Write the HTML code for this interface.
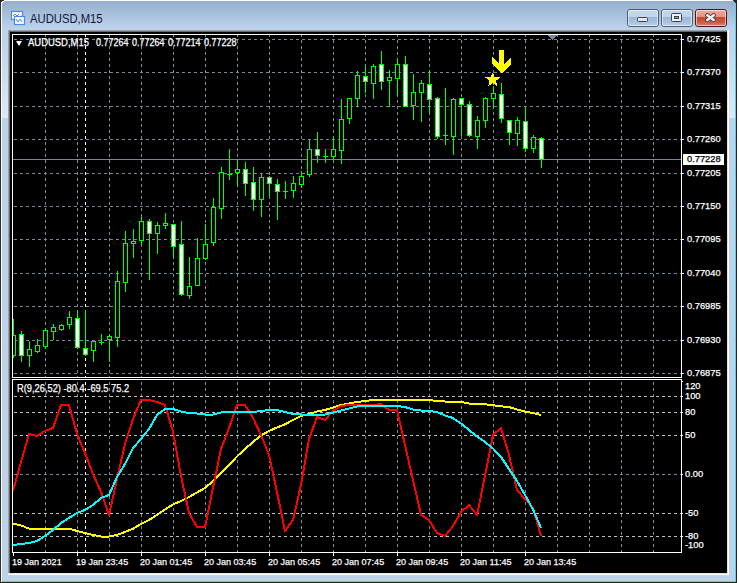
<!DOCTYPE html>
<html><head><meta charset="utf-8"><style>
html,body{margin:0;padding:0;}
body{width:739px;height:583px;overflow:hidden;position:relative;background:#fff;font-family:"Liberation Sans",sans-serif;}
.pl,.il,.tl,.hdr,.hnum,.ind,.plbox{-webkit-text-stroke:0.25px currentColor;}
.win{position:absolute;left:0;top:0;width:737px;height:583px;}
.abs{position:absolute;}
.pl{position:absolute;left:687px;font-size:9.6px;line-height:12px;color:#fff;transform:scaleX(0.97);transform-origin:0 0;white-space:nowrap;}
.il{position:absolute;left:685px;font-size:9.6px;line-height:12px;color:#fff;transform:scaleX(0.97);transform-origin:0 0;white-space:nowrap;}
.tl{position:absolute;top:556px;font-size:9.6px;line-height:12px;color:#fff;transform:scaleX(0.94);transform-origin:0 0;white-space:nowrap;}
.hdr{position:absolute;left:28px;top:37px;font-size:10px;line-height:12px;color:#fff;transform:scaleX(0.945);transform-origin:0 0;white-space:pre;}
.hnum{position:absolute;top:37px;font-size:10px;line-height:12px;color:#fff;transform:scaleX(0.9);transform-origin:0 0;white-space:pre;}
.ind{position:absolute;left:17px;top:383px;font-size:10px;line-height:12px;color:#fff;transform:scaleX(0.93);transform-origin:0 0;white-space:pre;}
.title{position:absolute;left:30px;top:11px;font-size:12.5px;line-height:16px;color:#14143a;transform:scaleX(0.9);transform-origin:0 0;white-space:nowrap;}
.btn{position:absolute;top:9px;width:30px;height:16px;border:1px solid #4f5d72;border-radius:3px;background:linear-gradient(#c3d6eb 0px,#c0d3ea 7px,#9cb6d3 7px,#a9c2de 12px,#b9d0ea 16px);}
.cls{border-color:#4e1422;background:linear-gradient(#eba99b 0px,#e29584 7px,#c3462d 7px,#cc5a40 12px,#dc8068 16px);}
.bin{position:absolute;left:0;top:0;right:0;bottom:0;border:1px solid rgba(255,255,255,0.55);border-radius:2px;}
.gmin{position:absolute;left:9px;top:7px;width:9px;height:3px;background:#e6e6e6;border:1px solid #3a4250;border-radius:1.5px;}
.gmax{position:absolute;left:9px;top:3px;width:9px;height:7px;background:#f0f0f0;border:1px solid #3a4250;border-radius:1.5px;}
.gmax div{position:absolute;left:2px;top:2px;width:3px;height:1px;background:#7ea4cc;border:1px solid #3a4250;}
.plbox{position:absolute;left:687px;top:153px;font-size:9.6px;line-height:12px;color:#000;transform:scaleX(0.97);transform-origin:0 0;white-space:nowrap;}
.tri{position:absolute;left:16px;top:41px;width:0;height:0;border-left:3.5px solid transparent;border-right:3.5px solid transparent;border-top:5px solid #fff;}
</style></head><body>
<div class="abs" style="left:0;top:0;width:737px;height:583px;background:#bcd3ea;"></div>
<div class="abs" style="left:0;top:0;width:737px;height:30px;background:linear-gradient(#93adcb,#bdd4ec);"></div>
<div class="abs" style="left:0;top:0;width:737px;height:1px;background:#fff;"></div>
<div class="abs" style="left:0;top:0;width:1px;height:583px;background:#333;"></div>
<div class="abs" style="left:1px;top:1px;width:1px;height:582px;background:#fff;"></div>
<div class="abs" style="left:735px;top:3px;width:1px;height:579px;background:#4fd0f5;"></div>
<div class="abs" style="left:736px;top:2px;width:1px;height:581px;background:#222;"></div>
<div class="abs" style="left:737px;top:0;width:2px;height:583px;background:#fff;"></div>
<div class="abs" style="left:2px;top:581px;width:734px;height:1px;background:#4fd0f5;"></div>
<div class="abs" style="left:0;top:582px;width:737px;height:1px;background:#222;"></div>
<div class="abs" style="left:2px;top:36px;width:6px;height:82px;background:linear-gradient(rgba(255,255,255,0),rgba(255,255,255,0.5));"></div>
<div class="abs" style="left:729px;top:36px;width:6px;height:82px;background:linear-gradient(rgba(255,255,255,0),rgba(255,255,255,0.5));"></div>
<div class="abs" style="left:8px;top:30px;width:721px;height:545px;background:#fff;"></div>
<div class="abs" style="left:8px;top:30px;width:720px;height:544px;background:#e3e3e3;"></div>
<div class="abs" style="left:8px;top:30px;width:719px;height:543px;background:#a0a0a0;"></div>
<div class="abs" style="left:9px;top:31px;width:718px;height:542px;background:#696969;"></div>
<svg class="abs" style="left:0;top:0" width="739" height="583" shape-rendering="crispEdges">
<defs><clipPath id="indclip"><rect x="13" y="380" width="668" height="172"/></clipPath></defs>
<rect x="10" y="32" width="717" height="541" fill="#000"/>
<rect x="12.5" y="34.5" width="669" height="343" fill="none" stroke="#fff" stroke-width="1"/>
<rect x="12.5" y="379.5" width="669" height="173" fill="none" stroke="#fff" stroke-width="1"/>
<line x1="14" y1="39.5" x2="681" y2="39.5" stroke="#778899" stroke-dasharray="3 3"/>
<line x1="14" y1="72.5" x2="681" y2="72.5" stroke="#778899" stroke-dasharray="3 3"/>
<line x1="14" y1="106.5" x2="681" y2="106.5" stroke="#778899" stroke-dasharray="3 3"/>
<line x1="14" y1="139.5" x2="681" y2="139.5" stroke="#778899" stroke-dasharray="3 3"/>
<line x1="14" y1="173.5" x2="681" y2="173.5" stroke="#778899" stroke-dasharray="3 3"/>
<line x1="14" y1="206.5" x2="681" y2="206.5" stroke="#778899" stroke-dasharray="3 3"/>
<line x1="14" y1="239.5" x2="681" y2="239.5" stroke="#778899" stroke-dasharray="3 3"/>
<line x1="14" y1="273.5" x2="681" y2="273.5" stroke="#778899" stroke-dasharray="3 3"/>
<line x1="14" y1="306.5" x2="681" y2="306.5" stroke="#778899" stroke-dasharray="3 3"/>
<line x1="14" y1="340.5" x2="681" y2="340.5" stroke="#778899" stroke-dasharray="3 3"/>
<line x1="14" y1="373.5" x2="681" y2="373.5" stroke="#778899" stroke-dasharray="3 3"/>
<line x1="45.5" y1="35" x2="45.5" y2="377" stroke="#778899" stroke-dasharray="3 3" stroke-dashoffset="1"/>
<line x1="45.5" y1="382" x2="45.5" y2="552" stroke="#778899" stroke-dasharray="3 3"/>
<line x1="77.5" y1="35" x2="77.5" y2="377" stroke="#778899" stroke-dasharray="3 3" stroke-dashoffset="1"/>
<line x1="77.5" y1="382" x2="77.5" y2="552" stroke="#778899" stroke-dasharray="3 3"/>
<line x1="109.5" y1="35" x2="109.5" y2="377" stroke="#778899" stroke-dasharray="3 3" stroke-dashoffset="1"/>
<line x1="109.5" y1="382" x2="109.5" y2="552" stroke="#778899" stroke-dasharray="3 3"/>
<line x1="141.5" y1="35" x2="141.5" y2="377" stroke="#778899" stroke-dasharray="3 3" stroke-dashoffset="1"/>
<line x1="141.5" y1="382" x2="141.5" y2="552" stroke="#778899" stroke-dasharray="3 3"/>
<line x1="173.5" y1="35" x2="173.5" y2="377" stroke="#778899" stroke-dasharray="3 3" stroke-dashoffset="1"/>
<line x1="173.5" y1="382" x2="173.5" y2="552" stroke="#778899" stroke-dasharray="3 3"/>
<line x1="205.5" y1="35" x2="205.5" y2="377" stroke="#778899" stroke-dasharray="3 3" stroke-dashoffset="1"/>
<line x1="205.5" y1="382" x2="205.5" y2="552" stroke="#778899" stroke-dasharray="3 3"/>
<line x1="237.5" y1="35" x2="237.5" y2="377" stroke="#778899" stroke-dasharray="3 3" stroke-dashoffset="1"/>
<line x1="237.5" y1="382" x2="237.5" y2="552" stroke="#778899" stroke-dasharray="3 3"/>
<line x1="269.5" y1="35" x2="269.5" y2="377" stroke="#778899" stroke-dasharray="3 3" stroke-dashoffset="1"/>
<line x1="269.5" y1="382" x2="269.5" y2="552" stroke="#778899" stroke-dasharray="3 3"/>
<line x1="301.5" y1="35" x2="301.5" y2="377" stroke="#778899" stroke-dasharray="3 3" stroke-dashoffset="1"/>
<line x1="301.5" y1="382" x2="301.5" y2="552" stroke="#778899" stroke-dasharray="3 3"/>
<line x1="333.5" y1="35" x2="333.5" y2="377" stroke="#778899" stroke-dasharray="3 3" stroke-dashoffset="1"/>
<line x1="333.5" y1="382" x2="333.5" y2="552" stroke="#778899" stroke-dasharray="3 3"/>
<line x1="365.5" y1="35" x2="365.5" y2="377" stroke="#778899" stroke-dasharray="3 3" stroke-dashoffset="1"/>
<line x1="365.5" y1="382" x2="365.5" y2="552" stroke="#778899" stroke-dasharray="3 3"/>
<line x1="397.5" y1="35" x2="397.5" y2="377" stroke="#778899" stroke-dasharray="3 3" stroke-dashoffset="1"/>
<line x1="397.5" y1="382" x2="397.5" y2="552" stroke="#778899" stroke-dasharray="3 3"/>
<line x1="429.5" y1="35" x2="429.5" y2="377" stroke="#778899" stroke-dasharray="3 3" stroke-dashoffset="1"/>
<line x1="429.5" y1="382" x2="429.5" y2="552" stroke="#778899" stroke-dasharray="3 3"/>
<line x1="461.5" y1="35" x2="461.5" y2="377" stroke="#778899" stroke-dasharray="3 3" stroke-dashoffset="1"/>
<line x1="461.5" y1="382" x2="461.5" y2="552" stroke="#778899" stroke-dasharray="3 3"/>
<line x1="493.5" y1="35" x2="493.5" y2="377" stroke="#778899" stroke-dasharray="3 3" stroke-dashoffset="1"/>
<line x1="493.5" y1="382" x2="493.5" y2="552" stroke="#778899" stroke-dasharray="3 3"/>
<line x1="525.5" y1="35" x2="525.5" y2="377" stroke="#778899" stroke-dasharray="3 3" stroke-dashoffset="1"/>
<line x1="525.5" y1="382" x2="525.5" y2="552" stroke="#778899" stroke-dasharray="3 3"/>
<line x1="557.5" y1="35" x2="557.5" y2="377" stroke="#778899" stroke-dasharray="3 3" stroke-dashoffset="1"/>
<line x1="557.5" y1="382" x2="557.5" y2="552" stroke="#778899" stroke-dasharray="3 3"/>
<line x1="589.5" y1="35" x2="589.5" y2="377" stroke="#778899" stroke-dasharray="3 3" stroke-dashoffset="1"/>
<line x1="589.5" y1="382" x2="589.5" y2="552" stroke="#778899" stroke-dasharray="3 3"/>
<line x1="621.5" y1="35" x2="621.5" y2="377" stroke="#778899" stroke-dasharray="3 3" stroke-dashoffset="1"/>
<line x1="621.5" y1="382" x2="621.5" y2="552" stroke="#778899" stroke-dasharray="3 3"/>
<line x1="653.5" y1="35" x2="653.5" y2="377" stroke="#778899" stroke-dasharray="3 3" stroke-dashoffset="1"/>
<line x1="653.5" y1="382" x2="653.5" y2="552" stroke="#778899" stroke-dasharray="3 3"/>
<line x1="85.5" y1="35" x2="85.5" y2="377" stroke="#fff" stroke-dasharray="3 3" stroke-dashoffset="1"/>
<line x1="85.5" y1="382" x2="85.5" y2="552" stroke="#fff" stroke-dasharray="3 3"/>
<line x1="14" y1="396.5" x2="681" y2="396.5" stroke="#c0c0c0" stroke-dasharray="3 3"/>
<line x1="14" y1="412.5" x2="681" y2="412.5" stroke="#c0c0c0" stroke-dasharray="3 3"/>
<line x1="14" y1="435.5" x2="681" y2="435.5" stroke="#c0c0c0" stroke-dasharray="3 3"/>
<line x1="14" y1="474.5" x2="681" y2="474.5" stroke="#778899" stroke-dasharray="3 3"/>
<line x1="14" y1="513.5" x2="681" y2="513.5" stroke="#c0c0c0" stroke-dasharray="3 3"/>
<line x1="14" y1="536.5" x2="681" y2="536.5" stroke="#c0c0c0" stroke-dasharray="3 3"/>
<rect x="13" y="159" width="668" height="1" fill="#778899"/>
<polygon points="547.6,35 557.9,35 552.7,40.3" fill="#778899"/>
<rect x="13" y="319" width="1" height="39" fill="#00ff00"/>
<rect x="11" y="335" width="5" height="21" fill="#00ff00"/>
<rect x="12" y="336" width="3" height="19" fill="#000"/>
<rect x="21" y="331" width="1" height="31" fill="#00ff00"/>
<rect x="19" y="334" width="5" height="22" fill="#00ff00"/>
<rect x="20" y="335" width="3" height="20" fill="#fff"/>
<rect x="29" y="341" width="1" height="26" fill="#00ff00"/>
<rect x="27" y="349" width="5" height="7" fill="#00ff00"/>
<rect x="28" y="350" width="3" height="5" fill="#000"/>
<rect x="37" y="339" width="1" height="14" fill="#00ff00"/>
<rect x="35" y="345" width="5" height="7" fill="#00ff00"/>
<rect x="36" y="346" width="3" height="5" fill="#000"/>
<rect x="45" y="328" width="1" height="21" fill="#00ff00"/>
<rect x="43" y="330" width="5" height="17" fill="#00ff00"/>
<rect x="44" y="331" width="3" height="15" fill="#000"/>
<rect x="53" y="324" width="1" height="16" fill="#00ff00"/>
<rect x="51" y="327" width="5" height="5" fill="#00ff00"/>
<rect x="52" y="328" width="3" height="3" fill="#000"/>
<rect x="61" y="324" width="1" height="7" fill="#00ff00"/>
<rect x="59" y="325" width="5" height="5" fill="#00ff00"/>
<rect x="60" y="326" width="3" height="3" fill="#000"/>
<rect x="69" y="311" width="1" height="18" fill="#00ff00"/>
<rect x="67" y="317" width="5" height="8" fill="#00ff00"/>
<rect x="68" y="318" width="3" height="6" fill="#000"/>
<rect x="77" y="310" width="1" height="39" fill="#00ff00"/>
<rect x="75" y="318" width="5" height="30" fill="#00ff00"/>
<rect x="76" y="319" width="3" height="28" fill="#fff"/>
<rect x="85" y="310" width="1" height="46" fill="#00ff00"/>
<rect x="83" y="348" width="5" height="7" fill="#00ff00"/>
<rect x="84" y="349" width="3" height="5" fill="#fff"/>
<rect x="93" y="341" width="1" height="21" fill="#00ff00"/>
<rect x="91" y="341" width="5" height="10" fill="#00ff00"/>
<rect x="92" y="342" width="3" height="8" fill="#000"/>
<rect x="101" y="334" width="1" height="11" fill="#00ff00"/>
<rect x="99" y="342" width="5" height="1" fill="#00ff00"/>
<rect x="109" y="334" width="1" height="28" fill="#00ff00"/>
<rect x="107" y="336" width="5" height="4" fill="#00ff00"/>
<rect x="108" y="337" width="3" height="2" fill="#000"/>
<rect x="117" y="271" width="1" height="76" fill="#00ff00"/>
<rect x="115" y="281" width="5" height="57" fill="#00ff00"/>
<rect x="116" y="282" width="3" height="55" fill="#000"/>
<rect x="125" y="231" width="1" height="61" fill="#00ff00"/>
<rect x="123" y="243" width="5" height="40" fill="#00ff00"/>
<rect x="124" y="244" width="3" height="38" fill="#000"/>
<rect x="133" y="229" width="1" height="29" fill="#00ff00"/>
<rect x="131" y="241" width="5" height="3" fill="#00ff00"/>
<rect x="132" y="242" width="3" height="1" fill="#000"/>
<rect x="141" y="217" width="1" height="28" fill="#00ff00"/>
<rect x="139" y="221" width="5" height="20" fill="#00ff00"/>
<rect x="140" y="222" width="3" height="18" fill="#000"/>
<rect x="149" y="219" width="1" height="61" fill="#00ff00"/>
<rect x="147" y="221" width="5" height="13" fill="#00ff00"/>
<rect x="148" y="222" width="3" height="11" fill="#fff"/>
<rect x="157" y="222" width="1" height="32" fill="#00ff00"/>
<rect x="155" y="225" width="5" height="9" fill="#00ff00"/>
<rect x="156" y="226" width="3" height="7" fill="#000"/>
<rect x="165" y="213" width="1" height="16" fill="#00ff00"/>
<rect x="163" y="223" width="5" height="3" fill="#00ff00"/>
<rect x="164" y="224" width="3" height="1" fill="#000"/>
<rect x="173" y="224" width="1" height="34" fill="#00ff00"/>
<rect x="171" y="224" width="5" height="23" fill="#00ff00"/>
<rect x="172" y="225" width="3" height="21" fill="#fff"/>
<rect x="181" y="221" width="1" height="75" fill="#00ff00"/>
<rect x="179" y="244" width="5" height="51" fill="#00ff00"/>
<rect x="180" y="245" width="3" height="49" fill="#fff"/>
<rect x="189" y="257" width="1" height="42" fill="#00ff00"/>
<rect x="187" y="286" width="5" height="10" fill="#00ff00"/>
<rect x="188" y="287" width="3" height="8" fill="#000"/>
<rect x="197" y="238" width="1" height="48" fill="#00ff00"/>
<rect x="195" y="258" width="5" height="28" fill="#00ff00"/>
<rect x="196" y="259" width="3" height="26" fill="#000"/>
<rect x="205" y="224" width="1" height="36" fill="#00ff00"/>
<rect x="203" y="244" width="5" height="15" fill="#00ff00"/>
<rect x="204" y="245" width="3" height="13" fill="#000"/>
<rect x="213" y="198" width="1" height="48" fill="#00ff00"/>
<rect x="211" y="207" width="5" height="36" fill="#00ff00"/>
<rect x="212" y="208" width="3" height="34" fill="#000"/>
<rect x="221" y="167" width="1" height="52" fill="#00ff00"/>
<rect x="219" y="172" width="5" height="37" fill="#00ff00"/>
<rect x="220" y="173" width="3" height="35" fill="#000"/>
<rect x="229" y="149" width="1" height="31" fill="#00ff00"/>
<rect x="227" y="174" width="5" height="1" fill="#00ff00"/>
<rect x="237" y="159" width="1" height="28" fill="#00ff00"/>
<rect x="235" y="169" width="5" height="4" fill="#00ff00"/>
<rect x="236" y="170" width="3" height="2" fill="#000"/>
<rect x="245" y="162" width="1" height="34" fill="#00ff00"/>
<rect x="243" y="169" width="5" height="15" fill="#00ff00"/>
<rect x="244" y="170" width="3" height="13" fill="#fff"/>
<rect x="253" y="167" width="1" height="44" fill="#00ff00"/>
<rect x="251" y="182" width="5" height="18" fill="#00ff00"/>
<rect x="252" y="183" width="3" height="16" fill="#fff"/>
<rect x="261" y="174" width="1" height="43" fill="#00ff00"/>
<rect x="259" y="177" width="5" height="23" fill="#00ff00"/>
<rect x="260" y="178" width="3" height="21" fill="#000"/>
<rect x="269" y="176" width="1" height="20" fill="#00ff00"/>
<rect x="267" y="177" width="5" height="7" fill="#00ff00"/>
<rect x="268" y="178" width="3" height="5" fill="#fff"/>
<rect x="277" y="179" width="1" height="41" fill="#00ff00"/>
<rect x="275" y="184" width="5" height="8" fill="#00ff00"/>
<rect x="276" y="185" width="3" height="6" fill="#fff"/>
<rect x="285" y="181" width="1" height="18" fill="#00ff00"/>
<rect x="283" y="191" width="5" height="1" fill="#00ff00"/>
<rect x="293" y="176" width="1" height="22" fill="#00ff00"/>
<rect x="291" y="183" width="5" height="8" fill="#00ff00"/>
<rect x="292" y="184" width="3" height="6" fill="#000"/>
<rect x="301" y="171" width="1" height="17" fill="#00ff00"/>
<rect x="299" y="176" width="5" height="9" fill="#00ff00"/>
<rect x="300" y="177" width="3" height="7" fill="#000"/>
<rect x="309" y="140" width="1" height="37" fill="#00ff00"/>
<rect x="307" y="149" width="5" height="26" fill="#00ff00"/>
<rect x="308" y="150" width="3" height="24" fill="#000"/>
<rect x="317" y="132" width="1" height="31" fill="#00ff00"/>
<rect x="315" y="149" width="5" height="7" fill="#00ff00"/>
<rect x="316" y="150" width="3" height="5" fill="#fff"/>
<rect x="325" y="149" width="1" height="14" fill="#00ff00"/>
<rect x="323" y="156" width="5" height="1" fill="#00ff00"/>
<rect x="333" y="137" width="1" height="22" fill="#00ff00"/>
<rect x="331" y="149" width="5" height="8" fill="#00ff00"/>
<rect x="332" y="150" width="3" height="6" fill="#000"/>
<rect x="341" y="99" width="1" height="65" fill="#00ff00"/>
<rect x="339" y="119" width="5" height="32" fill="#00ff00"/>
<rect x="340" y="120" width="3" height="30" fill="#000"/>
<rect x="349" y="98" width="1" height="26" fill="#00ff00"/>
<rect x="347" y="98" width="5" height="21" fill="#00ff00"/>
<rect x="348" y="99" width="3" height="19" fill="#000"/>
<rect x="357" y="71" width="1" height="36" fill="#00ff00"/>
<rect x="355" y="75" width="5" height="24" fill="#00ff00"/>
<rect x="356" y="76" width="3" height="22" fill="#000"/>
<rect x="365" y="66" width="1" height="27" fill="#00ff00"/>
<rect x="363" y="76" width="5" height="6" fill="#00ff00"/>
<rect x="364" y="77" width="3" height="4" fill="#fff"/>
<rect x="373" y="64" width="1" height="35" fill="#00ff00"/>
<rect x="371" y="66" width="5" height="18" fill="#00ff00"/>
<rect x="372" y="67" width="3" height="16" fill="#000"/>
<rect x="381" y="51" width="1" height="39" fill="#00ff00"/>
<rect x="379" y="64" width="5" height="18" fill="#00ff00"/>
<rect x="380" y="65" width="3" height="16" fill="#fff"/>
<rect x="389" y="70" width="1" height="37" fill="#00ff00"/>
<rect x="387" y="77" width="5" height="4" fill="#00ff00"/>
<rect x="388" y="78" width="3" height="2" fill="#000"/>
<rect x="397" y="58" width="1" height="38" fill="#00ff00"/>
<rect x="395" y="64" width="5" height="15" fill="#00ff00"/>
<rect x="396" y="65" width="3" height="13" fill="#000"/>
<rect x="405" y="56" width="1" height="51" fill="#00ff00"/>
<rect x="403" y="64" width="5" height="43" fill="#00ff00"/>
<rect x="404" y="65" width="3" height="41" fill="#fff"/>
<rect x="413" y="74" width="1" height="46" fill="#00ff00"/>
<rect x="411" y="92" width="5" height="14" fill="#00ff00"/>
<rect x="412" y="93" width="3" height="12" fill="#000"/>
<rect x="421" y="80" width="1" height="42" fill="#00ff00"/>
<rect x="419" y="83" width="5" height="10" fill="#00ff00"/>
<rect x="420" y="84" width="3" height="8" fill="#000"/>
<rect x="429" y="70" width="1" height="43" fill="#00ff00"/>
<rect x="427" y="84" width="5" height="16" fill="#00ff00"/>
<rect x="428" y="85" width="3" height="14" fill="#fff"/>
<rect x="437" y="97" width="1" height="42" fill="#00ff00"/>
<rect x="435" y="98" width="5" height="39" fill="#00ff00"/>
<rect x="436" y="99" width="3" height="37" fill="#fff"/>
<rect x="445" y="88" width="1" height="57" fill="#00ff00"/>
<rect x="443" y="135" width="5" height="1" fill="#00ff00"/>
<rect x="453" y="98" width="1" height="57" fill="#00ff00"/>
<rect x="451" y="99" width="5" height="38" fill="#00ff00"/>
<rect x="452" y="100" width="3" height="36" fill="#000"/>
<rect x="461" y="98" width="1" height="38" fill="#00ff00"/>
<rect x="459" y="98" width="5" height="7" fill="#00ff00"/>
<rect x="460" y="99" width="3" height="5" fill="#fff"/>
<rect x="469" y="101" width="1" height="36" fill="#00ff00"/>
<rect x="467" y="104" width="5" height="32" fill="#00ff00"/>
<rect x="468" y="105" width="3" height="30" fill="#fff"/>
<rect x="477" y="116" width="1" height="33" fill="#00ff00"/>
<rect x="475" y="120" width="5" height="17" fill="#00ff00"/>
<rect x="476" y="121" width="3" height="15" fill="#000"/>
<rect x="485" y="97" width="1" height="31" fill="#00ff00"/>
<rect x="483" y="98" width="5" height="23" fill="#00ff00"/>
<rect x="484" y="99" width="3" height="21" fill="#000"/>
<rect x="493" y="86" width="1" height="23" fill="#00ff00"/>
<rect x="491" y="93" width="5" height="6" fill="#00ff00"/>
<rect x="492" y="94" width="3" height="4" fill="#000"/>
<rect x="501" y="83" width="1" height="40" fill="#00ff00"/>
<rect x="499" y="94" width="5" height="25" fill="#00ff00"/>
<rect x="500" y="95" width="3" height="23" fill="#fff"/>
<rect x="509" y="120" width="1" height="25" fill="#00ff00"/>
<rect x="507" y="120" width="5" height="13" fill="#00ff00"/>
<rect x="508" y="121" width="3" height="11" fill="#fff"/>
<rect x="517" y="117" width="1" height="29" fill="#00ff00"/>
<rect x="515" y="120" width="5" height="14" fill="#00ff00"/>
<rect x="516" y="121" width="3" height="12" fill="#000"/>
<rect x="525" y="107" width="1" height="45" fill="#00ff00"/>
<rect x="523" y="121" width="5" height="28" fill="#00ff00"/>
<rect x="524" y="122" width="3" height="26" fill="#fff"/>
<rect x="533" y="135" width="1" height="18" fill="#00ff00"/>
<rect x="531" y="137" width="5" height="12" fill="#00ff00"/>
<rect x="532" y="138" width="3" height="10" fill="#000"/>
<rect x="541" y="137" width="1" height="31" fill="#00ff00"/>
<rect x="539" y="138" width="5" height="22" fill="#00ff00"/>
<rect x="540" y="139" width="3" height="20" fill="#fff"/>
<rect x="10" y="35" width="2" height="342" fill="#000"/>
<rect x="12" y="34" width="1" height="344" fill="#fff"/>
<polygon points="499,50 504,50 504,64 511,57 511,64 501.5,73.5 492,64 492,57 499,64" fill="#ffff00"/>
<polygon points="492.70,72.00 494.61,77.27 500.21,77.46 495.79,80.90 497.34,86.29 492.70,83.15 488.06,86.29 489.61,80.90 485.19,77.46 490.79,77.27" fill="#ffff00"/>
<g clip-path="url(#indclip)">
<polyline points="13,523.5 21,525.5 29,528.5 37,528.5 45,528.5 53,528.5 61,528.5 69,528.5 77,531 85,533 93,535 101,536.5 109,536.5 117,535 125,532 133,528.7 141,524 149,520 157,515 165,509.5 173,504.5 181,501 189,497 197,492.5 205,488 213,481 221,473 229,465 237,456.5 245,449 253,442 261,435.5 269,431 277,427.5 285,424.3 293,420 301,416 309,414 317,411.5 325,410 333,407.5 341,405 349,403.5 357,402 365,401 373,400 381,400 389,400 397,400 405,400 413,400 421,400 429,400 437,401 445,401.5 453,402 461,402 469,403.5 477,404 485,404.2 493,405.3 501,406.3 509,407 517,409.5 525,411.5 533,413 541,415" fill="none" stroke="#ffff00" stroke-width="2" stroke-linejoin="round"/>
<polyline points="13,491 21,462 29,434 37,436 45,431 53,428 61,405 69,405 77,434 85,453 93,474 101,492 109,515 117,479 125,444 133,419 141,400 149,400 157,402 165,405 173,432 181,476 189,513 197,527 205,527 213,488 221,449 229,428 237,405 245,405 253,418 261,435 269,455 277,492 285,531 293,520 301,485 309,439 317,417 325,420 333,411 341,406 349,405 357,405 365,405 373,405 381,404 389,410 397,410 405,445 413,480 421,515 429,520 437,533 445,536 453,526 461,512 469,505 477,515 485,476 493,435 501,428 509,455 517,490 525,499 533,508 541,536" fill="none" stroke="#ff0000" stroke-width="2" stroke-linejoin="round"/>
<polyline points="13,545 21,544 29,543 37,541 45,536 53,530 61,523 69,518 77,513 85,510 93,505 101,498 109,495 117,477 125,464 133,448 141,439 149,429 157,415 165,409 173,409 181,411.5 189,413 197,413.5 205,414.5 213,414.5 221,412.5 229,411.5 237,412 245,412 253,412 261,411 269,410 277,410 285,412 293,414 301,414.5 309,414.5 317,414.5 325,414.5 333,412.5 341,410.5 349,408.5 357,406.5 365,405.8 373,405.8 381,405.8 389,405.8 397,406 405,407 413,409.5 421,410.5 429,411 437,412 445,415.5 453,418 461,423.5 469,430 477,436.5 485,442 493,448.5 501,457 509,469 517,481 525,495 533,509.5 541,528" fill="none" stroke="#00ffff" stroke-width="2" stroke-linejoin="round"/>
</g>
<rect x="682" y="39" width="2" height="1" fill="#fff"/>
<rect x="682" y="72" width="2" height="1" fill="#fff"/>
<rect x="682" y="106" width="2" height="1" fill="#fff"/>
<rect x="682" y="139" width="2" height="1" fill="#fff"/>
<rect x="682" y="173" width="2" height="1" fill="#fff"/>
<rect x="682" y="206" width="2" height="1" fill="#fff"/>
<rect x="682" y="239" width="2" height="1" fill="#fff"/>
<rect x="682" y="273" width="2" height="1" fill="#fff"/>
<rect x="682" y="306" width="2" height="1" fill="#fff"/>
<rect x="682" y="340" width="2" height="1" fill="#fff"/>
<rect x="682" y="373" width="2" height="1" fill="#fff"/>
<rect x="13" y="553" width="1" height="3" fill="#fff"/>
<rect x="77" y="553" width="1" height="3" fill="#fff"/>
<rect x="141" y="553" width="1" height="3" fill="#fff"/>
<rect x="205" y="553" width="1" height="3" fill="#fff"/>
<rect x="269" y="553" width="1" height="3" fill="#fff"/>
<rect x="333" y="553" width="1" height="3" fill="#fff"/>
<rect x="397" y="553" width="1" height="3" fill="#fff"/>
<rect x="461" y="553" width="1" height="3" fill="#fff"/>
<rect x="525" y="553" width="1" height="3" fill="#fff"/>
<rect x="682" y="381" width="1" height="1" fill="#fff"/>
<rect x="682" y="396" width="1" height="1" fill="#fff"/>
<rect x="682" y="412" width="1" height="1" fill="#fff"/>
<rect x="682" y="435" width="1" height="1" fill="#fff"/>
<rect x="682" y="474" width="1" height="1" fill="#fff"/>
<rect x="682" y="513" width="1" height="1" fill="#fff"/>
<rect x="682" y="536" width="1" height="1" fill="#fff"/>
<rect x="683" y="154" width="41" height="11" fill="#fff"/>
</svg>
<div class="pl" style="top:33px">0.77425</div>
<div class="pl" style="top:66px">0.77370</div>
<div class="pl" style="top:100px">0.77315</div>
<div class="pl" style="top:133px">0.77260</div>
<div class="pl" style="top:167px">0.77205</div>
<div class="pl" style="top:200px">0.77150</div>
<div class="pl" style="top:233px">0.77095</div>
<div class="pl" style="top:267px">0.77040</div>
<div class="pl" style="top:300px">0.76985</div>
<div class="pl" style="top:334px">0.76930</div>
<div class="pl" style="top:367px">0.76875</div>
<div class="il" style="top:380px">120</div>
<div class="il" style="top:390px">100</div>
<div class="il" style="top:406px">80</div>
<div class="il" style="top:429px">50</div>
<div class="il" style="top:468px">0.00</div>
<div class="il" style="top:507px">-50</div>
<div class="il" style="top:530px">-80</div>
<div class="il" style="top:539px">-100</div>
<div class="tl" style="left:12px">19 Jan 2021</div>
<div class="tl" style="left:76px">19 Jan 23:45</div>
<div class="tl" style="left:140px">20 Jan 01:45</div>
<div class="tl" style="left:204px">20 Jan 03:45</div>
<div class="tl" style="left:268px">20 Jan 05:45</div>
<div class="tl" style="left:332px">20 Jan 07:45</div>
<div class="tl" style="left:396px">20 Jan 09:45</div>
<div class="tl" style="left:460px">20 Jan 11:45</div>
<div class="tl" style="left:524px">20 Jan 13:45</div>
<div class="hdr">AUDUSD,M15</div><div class="hnum" style="left:96px">0.77264</div><div class="hnum" style="left:132px">0.77264</div><div class="hnum" style="left:168px">0.77214</div><div class="hnum" style="left:204px">0.77228</div>
<div class="plbox">0.77228</div>
<div class="tri"></div>
<div class="ind">R(9,26,52) -80.4 -69.5 75.2</div>
<svg class="abs" style="left:0;top:0" width="739" height="8" shape-rendering="crispEdges">
<rect x="0" y="0" width="4" height="1" fill="#2a2a2a"/><rect x="0" y="1" width="2" height="1" fill="#2a2a2a"/><rect x="0" y="2" width="1" height="2" fill="#2a2a2a"/>
<rect x="2" y="1" width="2" height="1" fill="#fff"/><rect x="1" y="2" width="2" height="1" fill="#fff"/><rect x="1" y="3" width="1" height="1" fill="#fff"/>
<rect x="733" y="0" width="4" height="1" fill="#2a2a2a"/><rect x="734" y="1" width="3" height="1" fill="#2a2a2a"/><rect x="735" y="2" width="2" height="1" fill="#2a2a2a"/>
<rect x="733" y="1" width="1" height="1" fill="#5fd0f0"/><rect x="734" y="2" width="1" height="1" fill="#5fd0f0"/>
</svg>
<div class="title">AUDUSD,M15</div>
<div class="btn" style="left:627px;"><div class="bin"></div><div class="gmin"></div></div>
<div class="btn" style="left:661px;"><div class="bin"></div><div class="gmax"><div></div></div></div>
<div class="btn cls" style="left:695px;"><div class="bin"></div>
<svg class="abs" style="left:9px;top:3px" width="13" height="11" viewBox="0 0 13 11"><path d="M2.3,2.3 L8.7,6.9 M8.7,2.3 L2.3,6.9" stroke="#3a4250" stroke-width="4.2" stroke-linecap="round"/><path d="M2.3,2.3 L8.7,6.9 M8.7,2.3 L2.3,6.9" stroke="#f4f4f4" stroke-width="2.5" stroke-linecap="round"/></svg></div>
<svg class="abs" style="left:10px;top:10px" width="17" height="16" viewBox="0 0 17 16">
<rect x="1.5" y="1.5" width="11" height="8" fill="#fff" stroke="#4a86ee" stroke-width="1.2"/>
<path d="M3,6 L5,4 L7,6 L9,4" fill="none" stroke="#4a86ee" stroke-width="1"/>
<rect x="4.5" y="6.5" width="10" height="8" fill="#fff" stroke="#4a86ee" stroke-width="1.2"/>
<path d="M6,9 L8,12 L10,9 L12,12" fill="none" stroke="#4a86ee" stroke-width="1"/>
</svg>
</body></html>
